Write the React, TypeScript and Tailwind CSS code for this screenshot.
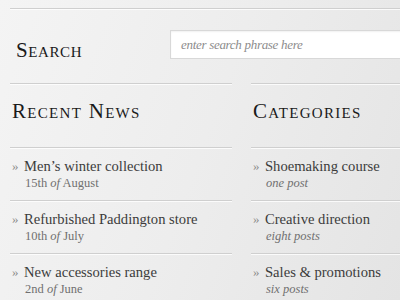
import React from "react";

function Rule() {
  return (
    <div>
      <div className="h-px bg-[#cfcfcf]" />
      <div className="h-px bg-white/80" />
    </div>
  );
}

type Item = { title: string; sub: React.ReactNode };

function Column({ heading, items, className }: { heading: string; items: Item[]; className?: string }) {
  return (
    <div className={className}>
      <Rule />
      <div className="pt-[14px] pb-[24px] pl-[2px]">
        <h2 className="text-[21px] leading-[24px] text-[#1a1a1a] tracking-[1.3px] [font-variant:small-caps]">
          {heading}
        </h2>
      </div>
      {items.map((it, i) => (
        <div key={i}>
          <Rule />
          <div className="flex pt-[8px] pb-[9px] pl-[2px]">
            <span className="w-[12px] text-[13px] leading-[18px] text-[#8a8a8a]">»</span>
            <div>
              <div className="text-[14.6px] leading-[18px] text-[#3c3c3c]">{it.title}</div>
              <div className="text-[12.5px] leading-[16px] text-[#707070] pl-px">{it.sub}</div>
            </div>
          </div>
        </div>
      ))}
    </div>
  );
}

export default function App() {
  const news: Item[] = [
    { title: "Men’s winter collection", sub: <>15th <i>of</i> August</> },
    { title: "Refurbished Paddington store", sub: <>10th <i>of</i> July</> },
    { title: "New accessories range", sub: <>2nd <i>of</i> June</> },
  ];
  const cats: Item[] = [
    { title: "Shoemaking course", sub: <i>one post</i> },
    { title: "Creative direction", sub: <i>eight posts</i> },
    { title: "Sales & promotions", sub: <i>six posts</i> },
  ];
  return (
    <div className="w-[400px] h-[300px] overflow-hidden bg-[linear-gradient(110deg,#f4f4f4_0%,#ededed_50%,#e4e4e4_100%)] pl-[10px] pt-[8px] font-['Liberation_Serif',serif]">
      <div className="w-[420px]">
        <Rule />
        <div className="flex h-[73px] items-start">
          <div className="w-[160px] pl-[6px] pt-[28px]">
            <h2 className="text-[21px] leading-[24px] text-[#1a1a1a] tracking-[0.6px] [font-variant:small-caps]">
              Search
            </h2>
          </div>
          <div className="mt-[20px] flex-1 h-[29px] bg-white border border-[#d8d8d8] shadow-[inset_0_1px_2px_rgba(0,0,0,0.06)] flex items-center pl-[10px]">
            <span className="italic text-[13px] tracking-[-0.3px] text-[#8c8c8c]">enter search phrase here</span>
          </div>
        </div>
        <div className="flex">
          <Column heading="Recent News" items={news} className="w-[222px]" />
          <Column heading="Categories" items={cats} className="ml-[19px] flex-1" />
        </div>
      </div>
    </div>
  );
}
